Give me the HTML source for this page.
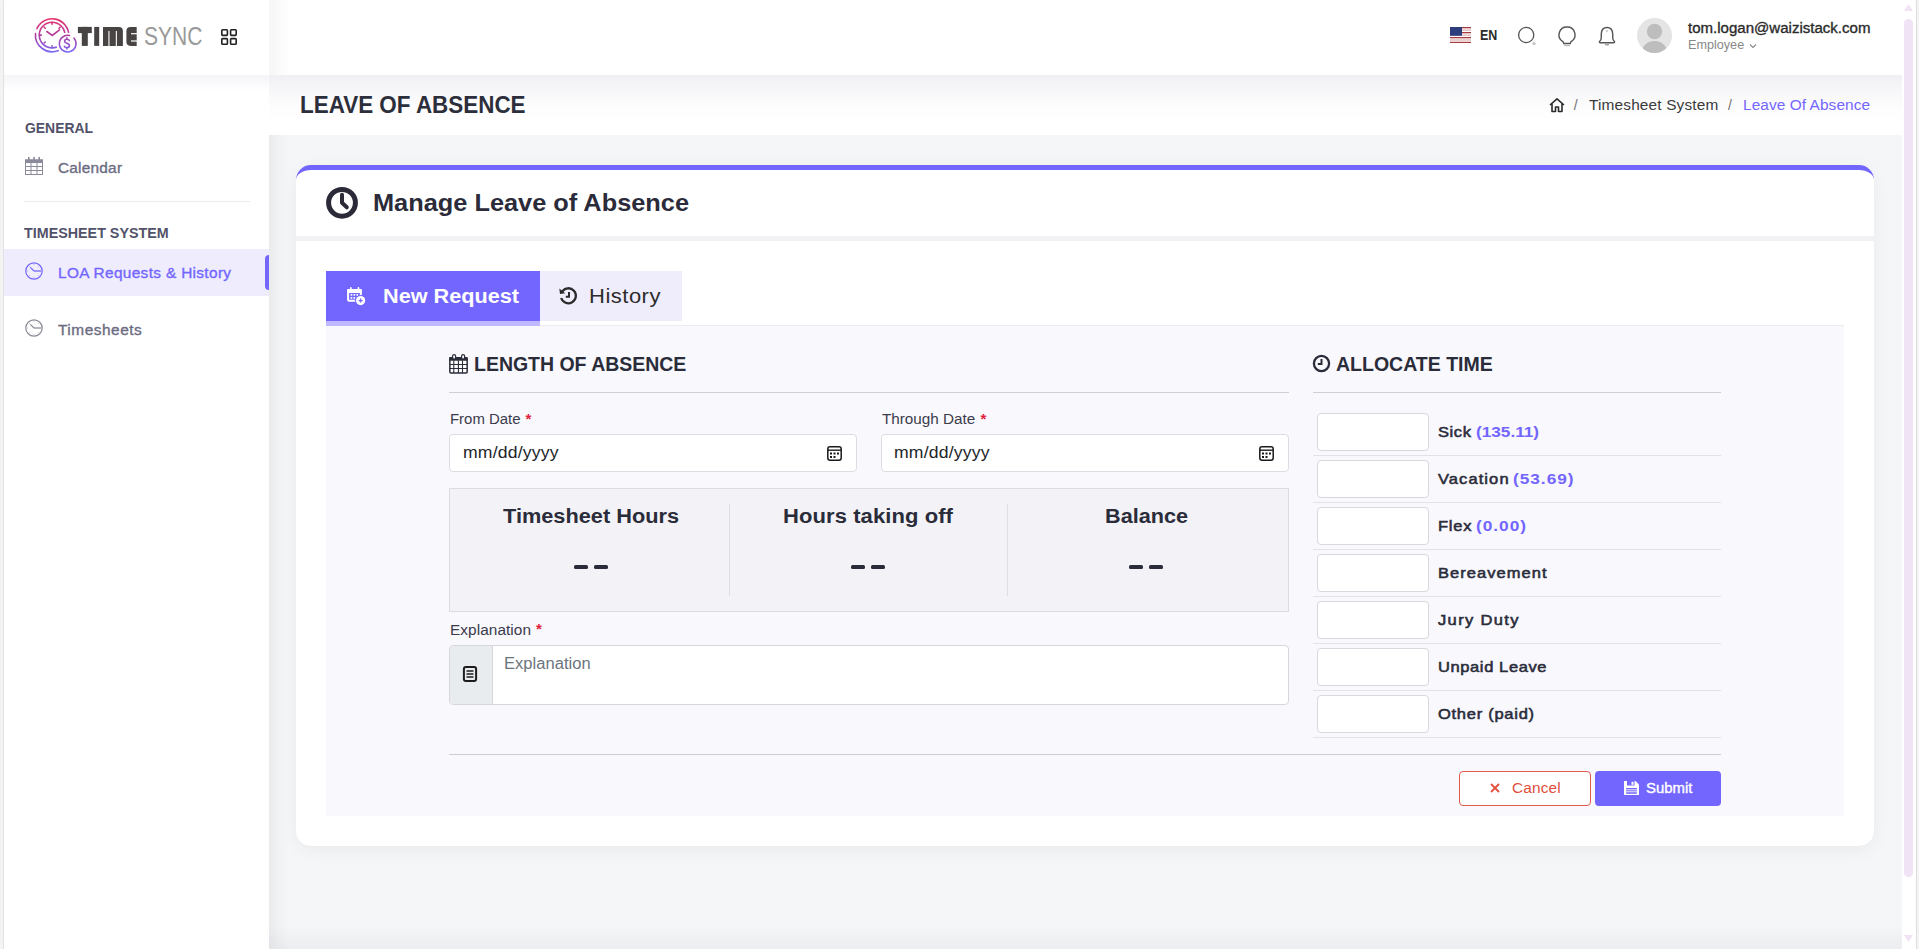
<!DOCTYPE html>
<html><head><meta charset="utf-8"><style>
html,body{margin:0;padding:0;width:1919px;height:949px;overflow:hidden;font-family:"Liberation Sans",sans-serif;}
.t{position:absolute;white-space:nowrap;line-height:1;}
svg{overflow:visible}
</style></head><body>
<div style="position:absolute;left:0px;top:0px;width:1919px;height:949px;background:#f5f6f8"></div>
<div style="position:absolute;left:269px;top:925px;width:1633px;height:24px;background:linear-gradient(rgba(0,0,0,0),rgba(0,0,20,0.04))"></div>
<div style="position:absolute;left:0px;top:0px;width:3px;height:949px;background:#f4f4f4"></div>
<div style="position:absolute;left:3px;top:0px;width:1px;height:949px;background:#e4e4e4"></div>
<div style="position:absolute;left:4px;top:0px;width:265px;height:949px;background:#fff;box-shadow:2px 0 12px rgba(0,0,0,0.025)"></div>
<div style="position:absolute;left:269px;top:0px;width:1633px;height:75px;background:#fff"></div>
<div style="position:absolute;left:269px;top:0px;width:22px;height:75px;background:linear-gradient(90deg,rgba(0,0,0,0.035),rgba(0,0,0,0))"></div>
<div style="position:absolute;left:269px;top:135px;width:20px;height:814px;background:linear-gradient(90deg,rgba(0,0,0,0.035),rgba(0,0,0,0))"></div>
<div style="position:absolute;left:4px;top:75px;width:265px;height:16px;background:linear-gradient(#f5f5f8,rgba(255,255,255,0))"></div>
<div style="position:absolute;left:269px;top:75px;width:1633px;height:60px;background:linear-gradient(#f0f0f4 0%,#f8f8fa 30%,#fdfdfd 55%,#fff 78%,#fff 100%)"></div>
<div style="position:absolute;left:1902px;top:0px;width:14px;height:949px;background:#fff"></div>
<div style="position:absolute;left:1904px;top:19px;width:9px;height:858px;background:#efe3f5;border-radius:5px"></div>
<svg style="position:absolute;left:1903px;top:3px;" width="11" height="9" viewBox="0 0 11 9"><path d="M5.5 1 L10 8 L1 8 Z" fill="#efe3f5"/></svg>
<svg style="position:absolute;left:1903px;top:934px;" width="11" height="9" viewBox="0 0 11 9"><path d="M1 1 L10 1 L5.5 8 Z" fill="#efe3f5"/></svg>
<div style="position:absolute;left:1916px;top:0px;width:1px;height:949px;background:#dedede"></div>
<div style="position:absolute;left:1917px;top:0px;width:2px;height:949px;background:#f4f4f4"></div>
<svg style="position:absolute;left:30px;top:14px" width="50" height="42" viewBox="0 0 50 42">
<defs><linearGradient id="lg" gradientUnits="userSpaceOnUse" x1="0" y1="4" x2="0" y2="38"><stop offset="0" stop-color="#e8306a"/><stop offset="0.5" stop-color="#b13c9e"/><stop offset="1" stop-color="#7b6af5"/></linearGradient></defs>
<g fill="none" stroke="url(#lg)" stroke-width="1.6" stroke-linecap="round">
<path d="M6.9 14.6 A16.7 16.7 0 0 1 38.8 21"/>
<path d="M5.5 19.5 A16.7 16.7 0 0 0 28.5 36.5"/>
<circle cx="22.1" cy="21.1" r="12.85"/>
<path d="M22.1 8.5V10.3M22.1 33.7V31.9M9.5 21.1H11.3M14.2 13.2L15.2 14.2M30 13.2L29 14.2M14.2 29L15.2 28"/>
<path d="M16.8 17.5 L22.3 21.5 L29.5 15.8"/>
<circle cx="37" cy="29.4" r="9.6" stroke="#fff" stroke-width="2.2" fill="#fff"/>
<path d="M44 24.2 A8.3 8.3 0 1 1 39.5 21.5"/>
<path d="M39.4 26.6 Q38.9 25.2 36.9 25.2 Q34.6 25.2 34.6 27.2 Q34.6 28.7 36.9 29.3 Q39.4 29.9 39.4 31.7 Q39.4 33.6 36.9 33.6 Q34.8 33.6 34.3 32.2 M36.9 23.9 V25.2 M36.9 33.6 V35"/>
</g></svg>
<svg style="position:absolute;left:77px;top:26px" width="62" height="21" viewBox="77 26 62 21">
<g fill="#484444">
<rect x="77.9" y="26.9" width="13.9" height="6.2"/><rect x="81.8" y="26.9" width="6" height="19"/>
<rect x="94.2" y="26.9" width="5" height="19"/>
<path d="M103 45.9 V26.9 H119 Q122.9 26.9 122.9 31 V45.9 Z"/>
<path d="M130.5 26.9 H136.7 V45.9 H130.5 Q126.4 45.9 126.4 41.8 V31 Q126.4 26.9 130.5 26.9 Z"/>
</g>
<g fill="#fff"><rect x="108.4" y="31" width="1.1" height="15"/><rect x="115.8" y="31" width="1.1" height="15"/>
<rect x="131" y="33.1" width="6" height="1.2"/><rect x="131" y="40.4" width="6" height="1.2"/></g>
</svg>
<div class="t" style="left:144.20px;top:23.19px;font-size:26px;font-weight:400;color:#999999;letter-spacing:0.000px;transform:scaleX(0.8089);transform-origin:0 0;">SYNC</div>
<svg style="position:absolute;left:221px;top:29px;" width="16" height="16" viewBox="0 0 16 16"><g fill="none" stroke="#222" stroke-width="1.6"><rect x="0.8" y="0.8" width="5.6" height="5.6" rx="0.8"/><rect x="9.6" y="0.8" width="5.6" height="5.6" rx="0.8"/><rect x="0.8" y="9.6" width="5.6" height="5.6" rx="0.8"/><rect x="9.6" y="9.6" width="5.6" height="5.6" rx="0.8"/></g></svg>
<div class="t" style="left:24.50px;top:121.15px;font-size:14px;font-weight:700;color:#52526a;letter-spacing:0.000px;transform:scaleX(0.9942);transform-origin:0 0;">GENERAL</div>
<svg style="position:absolute;left:25px;top:157px;" width="18" height="18" viewBox="0 0 18 18"><g fill="#8a8a9a"><rect x="0" y="2.5" width="18" height="3.5"/><rect x="3" y="0" width="1.6" height="3"/><rect x="8.2" y="0" width="1.6" height="3"/><rect x="13.4" y="0" width="1.6" height="3"/></g><g fill="none" stroke="#8a8a9a" stroke-width="1"><rect x="0.5" y="3" width="17" height="14.5"/><path d="M6 6V17.5M12 6V17.5M0.5 9.5H17.5M0.5 13.5H17.5"/></g></svg>
<div class="t" style="left:57.70px;top:160.95px;font-size:14px;font-weight:400;color:#6c6c82;letter-spacing:0.197px;transform:scaleX(1.1000);transform-origin:0 0;-webkit-text-stroke:0.34px #6c6c82;">Calendar</div>
<div style="position:absolute;left:24px;top:201px;width:226px;height:1px;background:#ececf0"></div>
<div class="t" style="left:24.30px;top:226.15px;font-size:14px;font-weight:700;color:#52526a;letter-spacing:0.000px;transform:scaleX(1.0219);transform-origin:0 0;">TIMESHEET SYSTEM</div>
<div style="position:absolute;left:4px;top:249px;width:265px;height:47px;background:#efedfd"></div>
<div style="position:absolute;left:265px;top:255px;width:4px;height:35px;background:#7366ff;border-radius:4px 0 0 4px"></div>
<svg style="position:absolute;left:25px;top:262px;" width="18" height="18" viewBox="0 0 18 18"><g fill="none" stroke="#7366ff"><circle cx="9" cy="9" r="8.2" stroke-width="1.2"/><path d="M9 2.2V3.2M9 15.8V14.8M2.2 9H3.2M4.2 4.2L4.9 4.9M13.8 4.2L13.1 4.9M4.2 13.8L4.9 13.1M13.8 13.8L13.1 13.1" stroke-width="0.8" opacity="0.6"/><path d="M5.3 5.3 L9 9" stroke-width="1.1"/><path d="M9 9 H16.2" stroke-width="1.7" opacity="0.75"/></g></svg>
<div class="t" style="left:57.70px;top:266.15px;font-size:14px;font-weight:400;color:#7366ff;letter-spacing:0.303px;transform:scaleX(1.1000);transform-origin:0 0;-webkit-text-stroke:0.34px #7366ff;">LOA Requests &amp; History</div>
<svg style="position:absolute;left:25px;top:319px;" width="18" height="18" viewBox="0 0 18 18"><g fill="none" stroke="#8a8a96"><circle cx="9" cy="9" r="8.2" stroke-width="1.2"/><path d="M9 2.2V3.2M9 15.8V14.8M2.2 9H3.2M4.2 4.2L4.9 4.9M13.8 4.2L13.1 4.9M4.2 13.8L4.9 13.1M13.8 13.8L13.1 13.1" stroke-width="0.8" opacity="0.6"/><path d="M5.3 5.3 L9 9" stroke-width="1.1"/><path d="M9 9 H16.2" stroke-width="1.7" opacity="0.75"/></g></svg>
<div class="t" style="left:57.70px;top:323.15px;font-size:14px;font-weight:400;color:#6c6c82;letter-spacing:0.477px;transform:scaleX(1.1000);transform-origin:0 0;-webkit-text-stroke:0.34px #6c6c82;">Timesheets</div>
<svg style="position:absolute;left:1450px;top:27px" width="21" height="16" viewBox="0 0 21 16">
<rect width="21" height="16" fill="#fff"/>
<g fill="#a8393f"><rect y="0" width="21" height="1.3"/><rect y="5" width="21" height="1.3"/><rect y="10" width="21" height="1.3"/><rect y="14.8" width="21" height="1.2"/></g>
<g fill="#dcb0b0"><rect y="2.5" width="21" height="1.2"/><rect y="7.5" width="21" height="1.2"/><rect y="12.4" width="21" height="1.2"/></g>
<rect width="12" height="8.8" fill="#2e3d7c"/></svg>
<div class="t" style="left:1479.60px;top:27.95px;font-size:14px;font-weight:700;color:#2b2b2b;letter-spacing:0.000px;transform:scaleX(0.8918);transform-origin:0 0;">EN</div>
<svg style="position:absolute;left:1516px;top:25px;" width="22" height="22" viewBox="0 0 22 22"><circle cx="10.2" cy="10" r="7.6" fill="none" stroke="#555" stroke-width="1.3"/><circle cx="18" cy="18.6" r="1.6" fill="#c4c4c4"/></svg>
<svg style="position:absolute;left:1557px;top:25px;" width="20" height="22" viewBox="0 0 20 22"><path d="M10 2 A7.8 7.8 0 0 0 5.5 16.3 Q6.5 17 6.7 18.5 L13.3 18.5 Q13.5 17 14.5 16.3 A7.8 7.8 0 0 0 10 2 Z" fill="none" stroke="#555" stroke-width="1.4"/><path d="M7 20.5 H13" stroke="#bbb" stroke-width="1.2"/></svg>
<svg style="position:absolute;left:1597px;top:25px;" width="20" height="22" viewBox="0 0 20 22"><path d="M10 2.5 Q4.5 2.5 4.3 9 L4.2 13.5 Q4.2 15 2.5 16.5 Q2 17.5 3.5 17.8 L16.5 17.8 Q18 17.5 17.5 16.5 Q15.8 15 15.8 13.5 L15.7 9 Q15.5 2.5 10 2.5 Z" fill="none" stroke="#555" stroke-width="1.4"/><path d="M8.2 19 Q10 21 11.8 19" fill="none" stroke="#999" stroke-width="1.2"/><path d="M10 5 V7" stroke="#aaa" stroke-width="1"/></svg>
<svg style="position:absolute;left:1637px;top:18px" width="35" height="35" viewBox="0 0 35 35">
<defs><clipPath id="ac"><circle cx="17.5" cy="17.5" r="17.5"/></clipPath></defs>
<circle cx="17.5" cy="17.5" r="17.5" fill="#e4e4e4"/>
<g clip-path="url(#ac)" fill="#bdbdbd"><circle cx="17.5" cy="13.5" r="7.7"/><ellipse cx="17.5" cy="34" rx="12.5" ry="11"/></g></svg>
<div class="t" style="left:1688.00px;top:21.15px;font-size:14px;font-weight:400;color:#2b2b2b;letter-spacing:0.000px;transform:scaleX(1.0742);transform-origin:0 0;-webkit-text-stroke:0.34px #2b2b2b;">tom.logan@waizistack.com</div>
<div class="t" style="left:1688.00px;top:38.84px;font-size:12px;font-weight:400;color:#888;letter-spacing:0.000px;transform:scaleX(1.0524);transform-origin:0 0;">Employee</div>
<svg style="position:absolute;left:1749px;top:43px;" width="8" height="6" viewBox="0 0 8 6"><path d="M1 1.5 L4 4.5 L7 1.5" fill="none" stroke="#888" stroke-width="1.1"/></svg>
<div class="t" style="left:300.40px;top:92.68px;font-size:24px;font-weight:700;color:#2c2f3b;letter-spacing:0.000px;transform:scaleX(0.9345);transform-origin:0 0;">LEAVE OF ABSENCE</div>
<svg style="position:absolute;left:1548px;top:97px;" width="18" height="16" viewBox="0 0 18 16"><path d="M2 8 L9 1.8 L16 8 M4 6.5 V14.5 H7.5 V10 H10.5 V14.5 H14 V6.5" fill="none" stroke="#2b2b2b" stroke-width="1.6" stroke-linejoin="round"/></svg>
<div class="t" style="left:1573.70px;top:98.15px;font-size:14px;font-weight:400;color:#6f6f6f;letter-spacing:0.000px;">/</div>
<div class="t" style="left:1588.70px;top:97.95px;font-size:14px;font-weight:400;color:#3a3a3a;letter-spacing:0.143px;transform:scaleX(1.1000);transform-origin:0 0;">Timesheet System</div>
<div class="t" style="left:1728.00px;top:98.15px;font-size:14px;font-weight:400;color:#6f6f6f;letter-spacing:0.000px;">/</div>
<div class="t" style="left:1742.90px;top:97.95px;font-size:14px;font-weight:400;color:#7366ff;letter-spacing:0.070px;transform:scaleX(1.1000);transform-origin:0 0;">Leave Of Absence</div>
<div style="position:absolute;left:296px;top:165px;width:1578px;height:681px;background:#fff;border-radius:15px;box-shadow:0 4px 18px rgba(0,0,0,0.05)"></div>
<div style="position:absolute;left:296px;top:165px;width:1578px;height:30px;border-top:5px solid #7366ff;border-radius:15px 15px 0 0;box-sizing:border-box"></div>
<svg style="position:absolute;left:325px;top:186px;" width="34" height="34" viewBox="0 0 34 34"><circle cx="17" cy="16.8" r="13.4" fill="none" stroke="#2a2a38" stroke-width="5"/><path d="M17 8.8 V16.8 L21.8 21.3" fill="none" stroke="#2a2a38" stroke-width="4" stroke-linecap="round" stroke-linejoin="round"/></svg>
<div class="t" style="left:372.90px;top:190.98px;font-size:24px;font-weight:700;color:#2b2b3a;letter-spacing:0.000px;transform:scaleX(1.0561);transform-origin:0 0;">Manage Leave of Absence</div>
<div style="position:absolute;left:296px;top:236px;width:1578px;height:5px;background:#f2f2f4"></div>
<div style="position:absolute;left:326px;top:271px;width:214px;height:50px;background:#7366ff"></div>
<div style="position:absolute;left:326px;top:321px;width:214px;height:5px;background:#c0b8ff"></div>
<div style="position:absolute;left:540px;top:271px;width:142px;height:50px;background:#efedfc"></div>
<div style="position:absolute;left:540px;top:325px;width:1304px;height:1px;background:#ebebf1"></div>
<div style="position:absolute;left:326px;top:326px;width:1518px;height:490px;background:#f8f8fd"></div>
<svg style="position:absolute;left:345px;top:285px;" width="22" height="22" viewBox="0 0 22 22"><rect x="3.1" y="4.9" width="12.7" height="10.9" rx="1" fill="none" stroke="#fff" stroke-width="2"/><rect x="2.1" y="3.9" width="14.7" height="4" rx="1" fill="#fff"/><g fill="#fff"><rect x="5" y="2" width="1.7" height="3.2" rx="0.8"/><rect x="12.6" y="2" width="1.7" height="3.2" rx="0.8"/><rect x="5.6" y="9" width="1.7" height="1.7"/><rect x="8.5" y="9" width="1.7" height="1.7"/><rect x="11.4" y="9" width="1.7" height="1.7"/><rect x="5.6" y="12.1" width="1.7" height="1.7"/><rect x="8.5" y="12.1" width="1.7" height="1.7"/></g><circle cx="15.6" cy="15.6" r="5.6" fill="#7366ff"/><circle cx="15.6" cy="15.6" r="4.6" fill="#fff"/><path d="M15.6 13.6V17.6M13.6 15.6H17.6" stroke="#7366ff" stroke-width="1.3"/></svg>
<div class="t" style="left:383.00px;top:286.07px;font-size:20px;font-weight:700;color:#ffffff;letter-spacing:0.000px;transform:scaleX(1.0828);transform-origin:0 0;">New Request</div>
<svg style="position:absolute;left:558px;top:286px;" width="21" height="19" viewBox="0 0 21 19"><path d="M4.2 5.5 A7.5 7.5 0 1 1 3.2 12" fill="none" stroke="#2b2b2b" stroke-width="2.3"/><path d="M1.3 2.5 L2 8 L7.2 7.2 Z" fill="#2b2b2b"/><path d="M11 6 V10.8 H7.8" fill="none" stroke="#2b2b2b" stroke-width="2"/></svg>
<div class="t" style="left:589.00px;top:286.07px;font-size:20px;font-weight:400;color:#2b2b2b;letter-spacing:0.452px;transform:scaleX(1.1000);transform-origin:0 0;">History</div>
<svg style="position:absolute;left:449px;top:354px;" width="20" height="20" viewBox="0 0 20 20"><rect x="0.85" y="3.8" width="17.3" height="15.3" rx="1" fill="#fff" stroke="#2a2c3a" stroke-width="1.5"/><rect x="0.2" y="3.1" width="18.4" height="3.6" rx="0.8" fill="#2a2c3a"/><g fill="#fff" stroke="#2a2c3a" stroke-width="1.2"><rect x="3.6" y="0.6" width="3" height="4.5" rx="1.5"/><rect x="12.6" y="0.6" width="3" height="4.5" rx="1.5"/></g><path d="M4.8 6.5V19M9.4 6.5V19M13.5 6.5V19M0.5 10.5H18.4M0.5 14.5H18.4" stroke="#2a2c3a" stroke-width="1.1"/></svg>
<div class="t" style="left:474.20px;top:354.07px;font-size:20px;font-weight:700;color:#2a2c3a;letter-spacing:0.000px;transform:scaleX(0.9734);transform-origin:0 0;">LENGTH OF ABSENCE</div>
<div style="position:absolute;left:449px;top:392px;width:840px;height:1px;background:#cfcfd6"></div>
<div class="t" style="left:449.50px;top:412.35px;font-size:14px;font-weight:400;color:#3b3b4b;letter-spacing:0.000px;transform:scaleX(1.0666);transform-origin:0 0;">From Date</div>
<div class="t" style="left:525.60px;top:410.65px;font-size:14px;font-weight:700;color:#e0223c;letter-spacing:0.000px;font-size:15px">*</div>
<div style="position:absolute;left:449px;top:434px;width:408px;height:38px;box-sizing:border-box;border:1px solid #dcdce2;border-radius:4px;background:#fff"></div>
<div class="t" style="left:462.60px;top:444.86px;font-size:16px;font-weight:400;color:#212529;letter-spacing:0.159px;transform:scaleX(1.1000);transform-origin:0 0;">mm/dd/yyyy</div>
<svg style="position:absolute;left:826.5px;top:446px;" width="15" height="15" viewBox="0 0 15 15"><rect x="0.8" y="0.8" width="13.4" height="13.4" rx="2.2" fill="none" stroke="#1a1a1a" stroke-width="1.5"/><path d="M1 4.2H14" stroke="#1a1a1a" stroke-width="1.4"/><g fill="#1a1a1a"><rect x="3" y="6.5" width="2" height="2"/><rect x="6.5" y="6.5" width="2" height="2"/><rect x="10" y="6.5" width="2" height="2"/><rect x="3" y="10" width="2" height="2"/><rect x="6.5" y="10" width="2" height="2"/></g></svg>
<div class="t" style="left:881.80px;top:412.15px;font-size:14px;font-weight:400;color:#3b3b4b;letter-spacing:0.000px;transform:scaleX(1.0888);transform-origin:0 0;">Through Date</div>
<div class="t" style="left:980.50px;top:410.65px;font-size:14px;font-weight:700;color:#e0223c;letter-spacing:0.000px;font-size:15px">*</div>
<div style="position:absolute;left:881px;top:434px;width:408px;height:38px;box-sizing:border-box;border:1px solid #dcdce2;border-radius:4px;background:#fff"></div>
<div class="t" style="left:894.30px;top:444.86px;font-size:16px;font-weight:400;color:#212529;letter-spacing:0.159px;transform:scaleX(1.1000);transform-origin:0 0;">mm/dd/yyyy</div>
<svg style="position:absolute;left:1258.5px;top:446px;" width="15" height="15" viewBox="0 0 15 15"><rect x="0.8" y="0.8" width="13.4" height="13.4" rx="2.2" fill="none" stroke="#1a1a1a" stroke-width="1.5"/><path d="M1 4.2H14" stroke="#1a1a1a" stroke-width="1.4"/><g fill="#1a1a1a"><rect x="3" y="6.5" width="2" height="2"/><rect x="6.5" y="6.5" width="2" height="2"/><rect x="10" y="6.5" width="2" height="2"/><rect x="3" y="10" width="2" height="2"/><rect x="6.5" y="10" width="2" height="2"/></g></svg>
<div style="position:absolute;left:449px;top:488px;width:840px;height:124px;box-sizing:border-box;border:1px solid #dcdce2;background:#f3f3f7"></div>
<div style="position:absolute;left:729px;top:504px;width:1px;height:92px;background:#dedee4"></div>
<div style="position:absolute;left:1007px;top:504px;width:1px;height:92px;background:#dedee4"></div>
<div class="t" style="left:503.00px;top:506.07px;font-size:20px;font-weight:700;color:#2a2c3a;letter-spacing:0.000px;transform:scaleX(1.0871);transform-origin:0 0;">Timesheet Hours</div>
<div class="t" style="left:783.00px;top:506.07px;font-size:20px;font-weight:700;color:#2a2c3a;letter-spacing:0.076px;transform:scaleX(1.1000);transform-origin:0 0;">Hours taking off</div>
<div class="t" style="left:1104.50px;top:506.07px;font-size:20px;font-weight:700;color:#2a2c3a;letter-spacing:0.000px;transform:scaleX(1.0821);transform-origin:0 0;">Balance</div>
<div style="position:absolute;left:574px;top:565px;width:14px;height:3.6px;background:#2a2c3a;border-radius:1.5px"></div>
<div style="position:absolute;left:594px;top:565px;width:14px;height:3.6px;background:#2a2c3a;border-radius:1.5px"></div>
<div style="position:absolute;left:851px;top:565px;width:14px;height:3.6px;background:#2a2c3a;border-radius:1.5px"></div>
<div style="position:absolute;left:871px;top:565px;width:14px;height:3.6px;background:#2a2c3a;border-radius:1.5px"></div>
<div style="position:absolute;left:1129px;top:565px;width:14px;height:3.6px;background:#2a2c3a;border-radius:1.5px"></div>
<div style="position:absolute;left:1149px;top:565px;width:14px;height:3.6px;background:#2a2c3a;border-radius:1.5px"></div>
<div class="t" style="left:449.50px;top:622.95px;font-size:14px;font-weight:400;color:#3b3b4b;letter-spacing:0.044px;transform:scaleX(1.1000);transform-origin:0 0;">Explanation</div>
<div class="t" style="left:535.90px;top:621.15px;font-size:14px;font-weight:700;color:#e0223c;letter-spacing:0.000px;font-size:15px">*</div>
<div style="position:absolute;left:449px;top:645px;width:840px;height:60px;box-sizing:border-box;border:1px solid #d6d6dc;border-radius:4px;background:#fff;overflow:hidden"><div style="position:absolute;left:0;top:0;width:42px;height:58px;background:#e9ecef;border-right:1px solid #d6d6dc"></div></div>
<svg style="position:absolute;left:462px;top:665px;" width="16" height="18" viewBox="0 0 16 18"><rect x="1.9" y="1.9" width="12.2" height="14.2" rx="2" fill="none" stroke="#1c1c1c" stroke-width="2"/><path d="M4.5 6H11.5M4.5 9H11.5M4.5 12H11.5" stroke="#1c1c1c" stroke-width="1.4"/></svg>
<div class="t" style="left:504.30px;top:655.76px;font-size:16px;font-weight:400;color:#6c757d;letter-spacing:0.000px;transform:scaleX(1.0359);transform-origin:0 0;">Explanation</div>
<svg style="position:absolute;left:1312px;top:354px;" width="19" height="19" viewBox="0 0 19 19"><circle cx="9.5" cy="9.5" r="7.6" fill="none" stroke="#2a2c3a" stroke-width="2.3"/><path d="M9.5 5V10H5.8" fill="none" stroke="#2a2c3a" stroke-width="2"/></svg>
<div class="t" style="left:1336.00px;top:354.07px;font-size:20px;font-weight:700;color:#2a2c3a;letter-spacing:0.000px;transform:scaleX(0.9751);transform-origin:0 0;">ALLOCATE TIME</div>
<div style="position:absolute;left:1313px;top:392px;width:408px;height:1px;background:#cfcfd6"></div>
<div style="position:absolute;left:1317px;top:413px;width:112px;height:38px;box-sizing:border-box;border:1px solid #d8d8de;border-radius:4px;background:#fff"></div>
<div class="t" style="left:1437.50px;top:424.10px;font-size:15px;font-weight:400;color:#2a2c3a;letter-spacing:0.533px;transform:scaleX(1.1000);transform-origin:0 0;-webkit-text-stroke:0.55px #2a2c3a;">Sick</div>
<div style="position:absolute;left:1313px;top:455px;width:408px;height:1px;background:#e2e2e8"></div>
<div style="position:absolute;left:1317px;top:460px;width:112px;height:38px;box-sizing:border-box;border:1px solid #d8d8de;border-radius:4px;background:#fff"></div>
<div class="t" style="left:1437.50px;top:471.10px;font-size:15px;font-weight:400;color:#2a2c3a;letter-spacing:0.983px;transform:scaleX(1.1000);transform-origin:0 0;-webkit-text-stroke:0.55px #2a2c3a;">Vacation</div>
<div style="position:absolute;left:1313px;top:502px;width:408px;height:1px;background:#e2e2e8"></div>
<div style="position:absolute;left:1317px;top:507px;width:112px;height:38px;box-sizing:border-box;border:1px solid #d8d8de;border-radius:4px;background:#fff"></div>
<div class="t" style="left:1437.50px;top:518.10px;font-size:15px;font-weight:400;color:#2a2c3a;letter-spacing:0.718px;transform:scaleX(1.1000);transform-origin:0 0;-webkit-text-stroke:0.55px #2a2c3a;">Flex</div>
<div style="position:absolute;left:1313px;top:549px;width:408px;height:1px;background:#e2e2e8"></div>
<div style="position:absolute;left:1317px;top:554px;width:112px;height:38px;box-sizing:border-box;border:1px solid #d8d8de;border-radius:4px;background:#fff"></div>
<div class="t" style="left:1437.50px;top:565.10px;font-size:15px;font-weight:400;color:#2a2c3a;letter-spacing:0.944px;transform:scaleX(1.1000);transform-origin:0 0;-webkit-text-stroke:0.55px #2a2c3a;">Bereavement</div>
<div style="position:absolute;left:1313px;top:596px;width:408px;height:1px;background:#e2e2e8"></div>
<div style="position:absolute;left:1317px;top:601px;width:112px;height:38px;box-sizing:border-box;border:1px solid #d8d8de;border-radius:4px;background:#fff"></div>
<div class="t" style="left:1437.50px;top:612.10px;font-size:15px;font-weight:400;color:#2a2c3a;letter-spacing:1.235px;transform:scaleX(1.1000);transform-origin:0 0;-webkit-text-stroke:0.55px #2a2c3a;">Jury Duty</div>
<div style="position:absolute;left:1313px;top:643px;width:408px;height:1px;background:#e2e2e8"></div>
<div style="position:absolute;left:1317px;top:648px;width:112px;height:38px;box-sizing:border-box;border:1px solid #d8d8de;border-radius:4px;background:#fff"></div>
<div class="t" style="left:1437.50px;top:659.10px;font-size:15px;font-weight:400;color:#2a2c3a;letter-spacing:0.549px;transform:scaleX(1.1000);transform-origin:0 0;-webkit-text-stroke:0.55px #2a2c3a;">Unpaid Leave</div>
<div style="position:absolute;left:1313px;top:690px;width:408px;height:1px;background:#e2e2e8"></div>
<div style="position:absolute;left:1317px;top:695px;width:112px;height:38px;box-sizing:border-box;border:1px solid #d8d8de;border-radius:4px;background:#fff"></div>
<div class="t" style="left:1437.50px;top:706.10px;font-size:15px;font-weight:400;color:#2a2c3a;letter-spacing:0.661px;transform:scaleX(1.1000);transform-origin:0 0;-webkit-text-stroke:0.55px #2a2c3a;">Other (paid)</div>
<div style="position:absolute;left:1313px;top:737px;width:408px;height:1px;background:#e2e2e8"></div>
<div class="t" style="left:1475.70px;top:424.10px;font-size:15px;font-weight:700;color:#7366ff;letter-spacing:0.000px;transform:scaleX(1.1455);transform-origin:0 0;">(135.11)</div>
<div class="t" style="left:1513.30px;top:471.10px;font-size:15px;font-weight:700;color:#7366ff;letter-spacing:0.851px;transform:scaleX(1.1500);transform-origin:0 0;">(53.69)</div>
<div class="t" style="left:1475.70px;top:518.10px;font-size:15px;font-weight:700;color:#7366ff;letter-spacing:0.856px;transform:scaleX(1.1500);transform-origin:0 0;">(0.00)</div>
<div style="position:absolute;left:449px;top:754px;width:1272px;height:1px;background:#cdcdd3"></div>
<div style="position:absolute;left:1459px;top:771px;width:132px;height:35px;box-sizing:border-box;border:1px solid #e05a4a;border-radius:4px;background:#fff"></div>
<svg style="position:absolute;left:1490px;top:783px;" width="10" height="10" viewBox="0 0 10 10"><path d="M1 1L9 9M9 1L1 9" stroke="#e0503c" stroke-width="1.8"/></svg>
<div class="t" style="left:1512.40px;top:781.05px;font-size:14px;font-weight:400;color:#e0503c;letter-spacing:0.153px;transform:scaleX(1.1000);transform-origin:0 0;">Cancel</div>
<div style="position:absolute;left:1595px;top:771px;width:126px;height:35px;background:#7366ff;border-radius:4px"></div>
<svg style="position:absolute;left:1623px;top:780px;" width="17" height="16" viewBox="0 0 17 16"><path d="M1 1H12.5L16 4.5V15H1Z" fill="#fff"/><rect x="4" y="1" width="7.5" height="4.5" fill="#7366ff"/><rect x="8.5" y="1.8" width="2" height="3" fill="#fff"/><rect x="3.2" y="8" width="10.6" height="5.8" fill="#7366ff"/><path d="M3.2 9.8H13.8M3.2 11.8H13.8" stroke="#fff" stroke-width="0.9"/></svg>
<div class="t" style="left:1645.50px;top:781.05px;font-size:14px;font-weight:400;color:#ffffff;letter-spacing:0.000px;transform:scaleX(1.0642);transform-origin:0 0;-webkit-text-stroke:0.34px #ffffff;">Submit</div>
</body></html>
